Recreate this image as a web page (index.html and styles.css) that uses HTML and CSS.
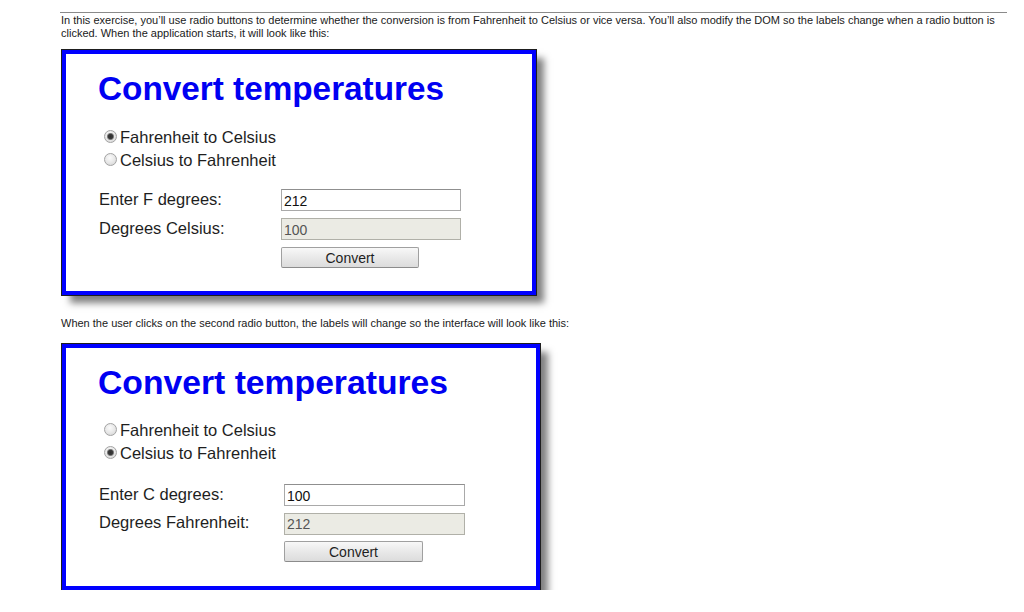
FILE: index.html
```html
<!DOCTYPE html>
<html lang="en">
<head>
<meta charset="utf-8">
<title>Convert temperatures exercise</title>
<link rel="stylesheet" href="styles.css">
</head>
<body>
<div class="page">
  <hr class="rule">
  <p class="note intro">In this exercise, you’ll use radio buttons to determine whether the conversion is from Fahrenheit to Celsius or vice versa. You’ll also modify the DOM so the labels change when a radio button is clicked. When the application starts, it will look like this:</p>

  <section class="shot">
    <h1 class="title">Convert temperatures</h1>
    <div class="radios">
      <label class="radio-row"><input class="radio" type="radio" name="dir1" checked><span>Fahrenheit to Celsius</span></label>
      <label class="radio-row"><input class="radio" type="radio" name="dir1"><span>Celsius to Fahrenheit</span></label>
    </div>
    <div class="fields">
      <div class="field"><span class="field-label">Enter F degrees:</span><input class="text" type="text" value="212"></div>
      <div class="field"><span class="field-label">Degrees Celsius:</span><input class="text" type="text" value="100" disabled></div>
      <div class="field"><span class="field-label"></span><button class="btn" type="button">Convert</button></div>
    </div>
  </section>

  <p class="note between">When the user clicks on the second radio button, the labels will change so the interface will look like this:</p>

  <section class="shot shot-b">
    <h1 class="title">Convert temperatures</h1>
    <div class="radios">
      <label class="radio-row"><input class="radio" type="radio" name="dir2"><span>Fahrenheit to Celsius</span></label>
      <label class="radio-row"><input class="radio" type="radio" name="dir2" checked><span>Celsius to Fahrenheit</span></label>
    </div>
    <div class="fields">
      <div class="field"><span class="field-label">Enter C degrees:</span><input class="text" type="text" value="100"></div>
      <div class="field"><span class="field-label">Degrees Fahrenheit:</span><input class="text" type="text" value="212" disabled></div>
      <div class="field"><span class="field-label"></span><button class="btn" type="button">Convert</button></div>
    </div>
  </section>
</div>
</body>
</html>
```

FILE: styles.css
```css
html, body {
  margin: 0;
  padding: 0;
  background: #ffffff;
}

body {
  font-family: "Liberation Sans", Arial, Helvetica, sans-serif;
  color: #1c1c1c;
}

.page {
  width: 1024px;
}

.rule {
  margin: 12px 0 0 60px;
  width: 947px;
  height: 1px;
  border: 0;
  background: #8a8a8a;
}

.note {
  margin: 0 0 0 61px;
  width: 945px;
  font-size: 11px;
  line-height: 13px;
  color: #1a1a1a;
}

.intro {
  margin-top: 1px;
}

.between {
  margin-top: 22px;
}

.shot {
  margin: 10px 0 0 62px;
  width: 474px;
  height: 245px;
  box-sizing: border-box;
  border: 4px solid #0000ff;
  background: #ffffff;
  box-shadow: 0 0 0 1px #1e1e1e, 8px 8px 7px rgba(0, 0, 0, 0.5);
  padding: 16px 0 0 33px;
  --label-col: 182px;
  --input-w: 180px;
  --btn-w: 138px;
  --fields-gap: 17px;
}

.shot-b {
  margin-top: 14px;
  width: 478px;
  height: 246px;
  padding-top: 15px;
  --label-col: 185px;
  --input-w: 181px;
  --btn-w: 139px;
  --fields-gap: 19px;
}

.title {
  margin: 0 0 18px -1px;
  font-size: 33.3px;
  line-height: 38px;
  font-weight: bold;
  color: #0000f2;
}

.shot-b .title {
  font-size: 33.7px;
}

.radios {
  display: flex;
  flex-direction: column;
}

.radio-row {
  display: flex;
  align-items: center;
  height: 23px;
  font-size: 16.5px;
  color: #1e1e1e;
}

.radio-row span {
  line-height: 23px;
}

.radio {
  appearance: none;
  -webkit-appearance: none;
  box-sizing: border-box;
  width: 13px;
  height: 13px;
  margin: -3px 3px 0 5px;
  border: 1px solid #a3a3a3;
  border-radius: 50%;
  background: radial-gradient(circle at 45% 35%, #fbfbfb 0, #e6e6e6 55%, #cfcfcf 100%);
}

.radio:checked {
  background:
    radial-gradient(circle at 50% 50%, #2e2e2e 0, #3a3a3a 2.2px, #8a8a8a 3.2px, rgba(138, 138, 138, 0) 4px),
    radial-gradient(circle at 45% 35%, #fbfbfb 0, #e6e6e6 55%, #cfcfcf 100%);
}

.fields {
  margin-top: var(--fields-gap);
  display: flex;
  flex-direction: column;
  gap: 7px;
}

.shot-b .fields {
  gap: 6.5px;
}

.field {
  display: flex;
  align-items: center;
}

.field-label {
  width: var(--label-col);
  flex: none;
  font-size: 16.5px;
  line-height: 20px;
  margin-top: -3px;
  color: #1e1e1e;
}

.text {
  box-sizing: border-box;
  width: var(--input-w);
  height: 22px;
  margin: 0;
  padding: 1px 2px 0;
  border: 1px solid #a9a9a9;
  border-top-color: #8f8f8f;
  font-family: "Liberation Sans", Arial, sans-serif;
  font-size: 14px;
  color: #111111;
  background: #ffffff;
  outline: none;
}

.text:disabled {
  background: #ebebe4;
  color: #555555;
  border-color: #b0b0a8;
}

.btn {
  box-sizing: border-box;
  width: var(--btn-w);
  height: 21px;
  margin: 0;
  padding: 0;
  border: 1px solid #a0a0a0;
  border-bottom-color: #8c8c8c;
  border-radius: 2px;
  background: linear-gradient(#f8f8f8, #e9e9e9 50%, #dcdcdc);
  font-family: "Liberation Sans", Arial, sans-serif;
  font-size: 14px;
  color: #1e1e1e;
}
```
